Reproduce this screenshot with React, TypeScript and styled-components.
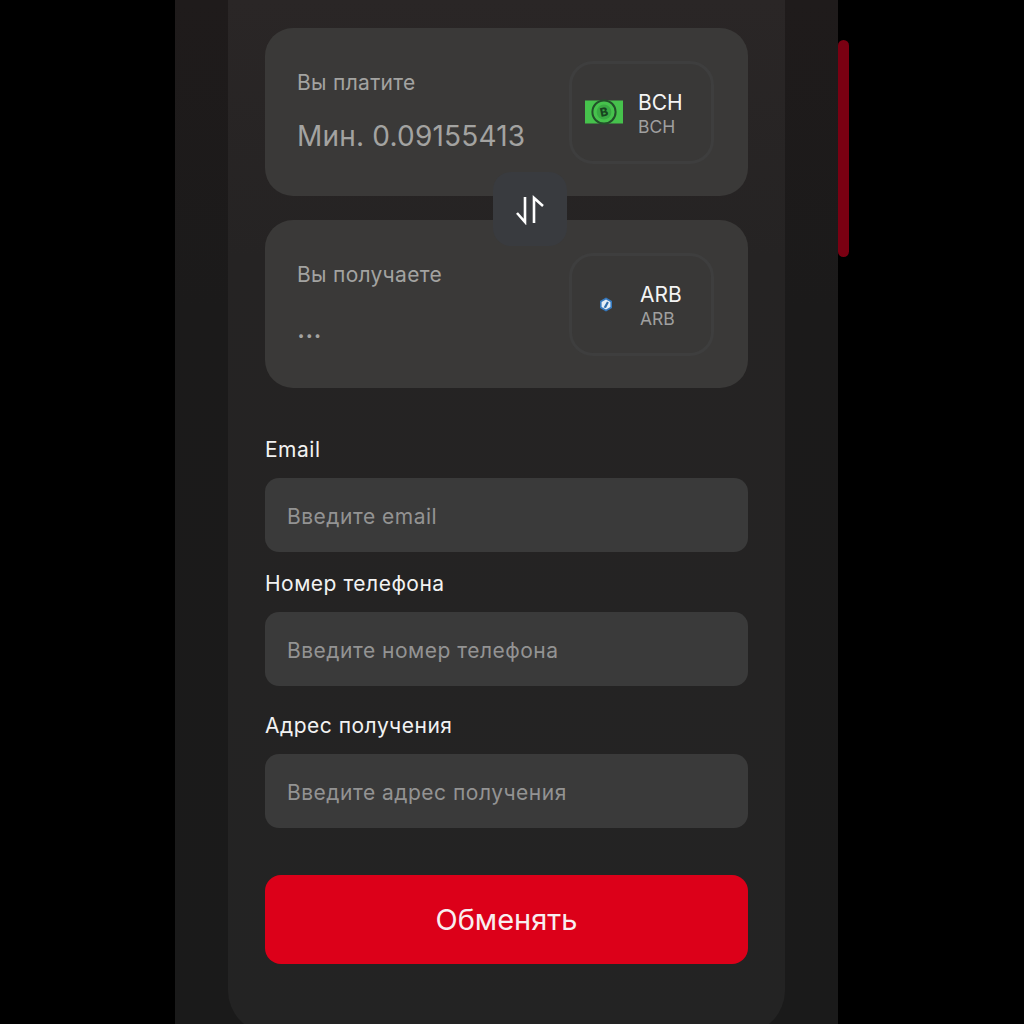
import React from 'react'
import styled, { createGlobalStyle } from 'styled-components';

const FONT = 'Inter, "Noto Sans", sans-serif';

const GlobalStyle = createGlobalStyle`
  html, body {
    margin: 0;
    height: 100%;
    background: #000;
    overflow: hidden;
  }
  * {
    box-sizing: border-box;
  }
`;

const BchIcon = () => (
  <svg width="38" height="26" viewBox="0 0 38 26">
    <rect x="0" y="1.5" width="38" height="23" fill="#46c24c" />
    <circle cx="19" cy="13" r="11.6" fill="#46c24c" stroke="#234f2a" strokeWidth="2" />
    <circle cx="19" cy="13" r="7.4" fill="#3aa943" />
    <text x="19" y="17.2" fontSize="12" fontWeight="800" fontFamily="Inter, sans-serif" textAnchor="middle" fill="#17431f" transform="rotate(-12 19 13)">B</text>
  </svg>
);

const ArbIcon = () => (
  <svg width="14" height="15" viewBox="0 0 14 15">
    <polygon points="7,0.5 13,4 13,11 7,14.5 1,11 1,4" fill="#3578bd" />
    <polygon points="7,2.5 11.4,5 11.4,10 7,12.5 2.6,10 2.6,5" fill="#e6eef6" />
    <path d="M4.6 10.6 L8 4.4 L9.8 5.6 L7 11 Z" fill="#2f6cab" />
  </svg>
);

const SwapIcon = () => (
  <svg width="30" height="32" viewBox="0 0 30 32" fill="none" stroke="#fff" strokeWidth="2.6">
    <path d="M10 4 V29 L2 20" />
    <path d="M19 30 V5 L28 13" />
  </svg>
);

const App: React.FC = () => {
  return (
    <Page>
      <GlobalStyle />
      <Shell>
        <Panel>
          <Exchange>
            <CurrencyCard>
              <CardText>
                <CardLabel>Вы платите</CardLabel>
                <CardValue>Мин. 0.09155413</CardValue>
              </CardText>
              <CoinSelect>
                <CoinIcon><BchIcon /></CoinIcon>
                <CoinNames>
                  <CoinName>BCH</CoinName>
                  <CoinTicker>BCH</CoinTicker>
                </CoinNames>
              </CoinSelect>
            </CurrencyCard>
            <SwapButton type="button"><SwapIcon /></SwapButton>
            <CurrencyCard>
              <CardText>
                <CardLabel>Вы получаете</CardLabel>
                <CardValue>...</CardValue>
              </CardText>
              <CoinSelect>
                <CoinIcon wide><ArbIcon /></CoinIcon>
                <CoinNames>
                  <CoinName>ARB</CoinName>
                  <CoinTicker>ARB</CoinTicker>
                </CoinNames>
              </CoinSelect>
            </CurrencyCard>
          </Exchange>
          <Form>
            <Field>
              <FieldLabel>Email</FieldLabel>
              <Input placeholder="Введите email" />
            </Field>
            <Field offset={17}>
              <FieldLabel>Номер телефона</FieldLabel>
              <Input placeholder="Введите номер телефона" />
            </Field>
            <Field offset={25}>
              <FieldLabel>Адрес получения</FieldLabel>
              <Input placeholder="Введите адрес получения" />
            </Field>
          </Form>
          <SubmitButton type="button">Обменять</SubmitButton>
        </Panel>
      </Shell>
      <ScrollThumb />
    </Page>
  );
}

const Page = styled.div`
  display: flex;
  justify-content: center;
  align-items: flex-start;
  height: 1024px;
  overflow: hidden;
  font-family: ${FONT};
`;

const Shell = styled.div`
  width: 663px;
  height: 1024px;
  padding: 0 53px;
  background: linear-gradient(180deg, #1f1b1b 0%, #1b1a1a 30%, #1a1a1a 100%);
`;

const Panel = styled.div`
  height: 1034px;
  padding: 28px 37px 0;
  border-radius: 0 0 44px 44px;
  background: linear-gradient(180deg, #2a2626 0%, #252323 25%, #232323 100%);
`;

const Exchange = styled.div`
  position: relative;
  display: flex;
  flex-direction: column;
  gap: 24px;
`;

const CurrencyCard = styled.div`
  display: flex;
  justify-content: space-between;
  align-items: center;
  height: 168px;
  padding: 0 34px 0 32px;
  border-radius: 28px;
  background: #3a3938;
`;

const CardText = styled.div`
  display: flex;
  flex-direction: column;
  gap: 24px;
  margin-top: -1px;
`;

const CardLabel = styled.div`
  font-size: 21px;
  line-height: 24px;
  letter-spacing: 0.3px;
  color: #a3a3a1;
`;

const CardValue = styled.div`
  font-size: 28px;
  line-height: 34px;
  letter-spacing: 0.2px;
  color: #a3a3a1;
`;

const CoinSelect = styled.div`
  display: flex;
  align-items: center;
  width: 145px;
  height: 103px;
  border: 3px solid #3e3e3e;
  border-radius: 24px;
  background: #393837;
`;

const CoinIcon = styled.div<{ wide?: boolean }>`
  display: flex;
  justify-content: center;
  width: ${(p) => (p.wide ? '68px' : '66px')};
  padding-right: ${(p) => (p.wide ? '0' : '2px')};
`;

const CoinNames = styled.div`
  display: flex;
  flex-direction: column;
  gap: 1px;
  margin-top: 4px;
`;

const CoinName = styled.div`
  font-size: 21px;
  line-height: 25px;
  color: #f4f4f4;
`;

const CoinTicker = styled.div`
  font-size: 17.5px;
  line-height: 22px;
  color: #a0a0a0;
`;

const SwapButton = styled.button`
  position: absolute;
  top: 144px;
  left: 228px;
  display: flex;
  align-items: center;
  justify-content: center;
  width: 74px;
  height: 74px;
  padding: 0;
  border: 0;
  border-radius: 18px;
  background: #393b3f;
`;

const Form = styled.div`
  display: flex;
  flex-direction: column;
  margin-top: 47px;
`;

const Field = styled.div<{ offset?: number }>`
  display: flex;
  flex-direction: column;
  gap: 13px;
  margin-top: ${(p) => p.offset || 0}px;
`;

const FieldLabel = styled.label`
  font-size: 21px;
  line-height: 30px;
  letter-spacing: 0.5px;
  color: #f2f2f2;
`;

const Input = styled.input`
  height: 74px;
  padding: 3px 22px 0;
  border: 0;
  border-radius: 14px;
  outline: none;
  background: #3a3a3a;
  font-family: ${FONT};
  font-size: 21px;
  letter-spacing: 0.5px;
  color: #fff;
  &::placeholder {
    color: #939393;
    opacity: 1;
  }
`;

const SubmitButton = styled.button`
  display: block;
  width: 100%;
  height: 89px;
  margin-top: 47px;
  border: 0;
  border-radius: 16px;
  background: #dc0019;
  font-family: ${FONT};
  font-size: 29px;
  color: #f8eef0;
`;

const ScrollThumb = styled.div`
  width: 11px;
  height: 217px;
  margin-top: 40px;
  border-radius: 6px;
  background: #7a0012;
`;

export default App;
